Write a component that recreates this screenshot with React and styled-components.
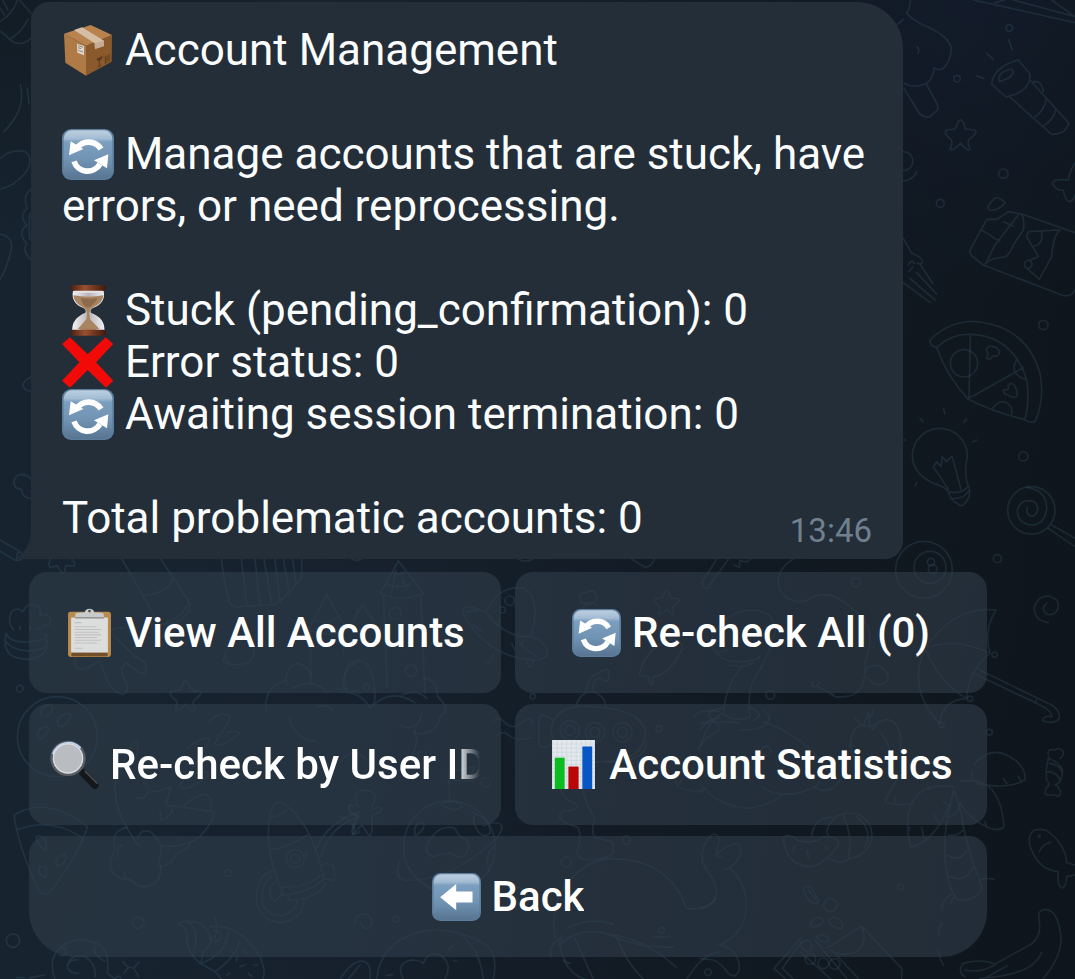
import React, { useId } from 'react';
import styled, { createGlobalStyle } from 'styled-components';

const GlobalStyle = createGlobalStyle`
  *, *::before, *::after { box-sizing: border-box; }
  html, body, #root { min-height: 100vh; }
  body {
    margin: 0;
    background: #111a23;
    font-family: Roboto, "Liberation Sans", sans-serif;
    color: #fbfcfd;
  }
`;

const Chat = styled.main`
  position: relative;
  min-height: 100vh;
  overflow: hidden;
  padding: 2px 88px 22px 29px;
  background:
    radial-gradient(ellipse 300px 260px at 0 0, rgba(14, 20, 26, 0.5), transparent),
    radial-gradient(ellipse 300px 300px at 90% 0, rgba(20, 30, 50, 0.5), transparent),
    linear-gradient(97deg, #172430 0%, #16212d 38%, #111922 68%, #0e151c 100%);
`;

const WallpaperSvg = styled.svg`
  position: absolute;
  top: 0;
  left: 0;
  width: 1075px;
  height: 979px;
  fill: none;
  stroke: #456579;
  stroke-opacity: 0.25;
  stroke-width: 5px;
  stroke-linecap: round;
  stroke-linejoin: round;
  pointer-events: none;
`;

const Thread = styled.div`
  position: relative;
  display: flex;
  flex-direction: column;
  gap: 13px;
`;

const Bubble = styled.article`
  position: relative;
  margin: 0 84px 0 2px;
  padding: 22px 31px 8px;
  background: #232e39;
  border-radius: 18px 46px 18px 0;
`;

const Tail = styled.svg`
  position: absolute;
  left: -14px;
  bottom: 0;
  width: 14px;
  height: 30px;
  fill: #232e39;
`;

const Paragraph = styled.p`
  margin: 0 0 52px;
  font-size: 44px;
  line-height: 52px;
`;

const StatList = styled.ul`
  margin: 0 0 52px;
  padding: 0;
  list-style: none;
  font-size: 44px;
  line-height: 52px;
`;

const Heading = styled.h1`
  margin: 0 0 52px;
  font-size: 44px;
  line-height: 52px;
  font-weight: 400;
`;

const Footer = styled.footer`
  display: flex;
  justify-content: space-between;
  height: 59px;
  font-size: 44px;
  line-height: 52px;
`;

const Time = styled.time`
  align-self: flex-end;
  font-size: 33px;
  line-height: 40px;
  color: #70808f;
`;

const Keyboard = styled.div`
  display: grid;
  grid-template-columns: 1fr 1fr;
  gap: 11px 14px;
`;

const Key = styled.button`
  display: flex;
  align-items: center;
  justify-content: ${(p) => (p.$clipped ? 'flex-start' : 'center')};
  min-width: 0;
  height: 121px;
  padding: 0 21px;
  border: 0;
  border-radius: ${(p) => (p.$wide ? '18px 18px 46px 46px' : '18px')};
  grid-column: ${(p) => (p.$wide ? '1 / -1' : 'auto')};
  background: rgba(48, 62, 75, 0.6);
  color: #ffffff;
  font-family: inherit;
  font-size: 42px;
  font-weight: 500;
  line-height: 50px;
  cursor: pointer;
`;

const KeyLabel = styled.span`
  display: flex;
  align-items: center;
  gap: 11px;
  min-width: 0;
  overflow: hidden;
  white-space: nowrap;
  mask-image: ${(p) =>
    p.$clipped ? 'linear-gradient(to right, #000 calc(100% - 24px), transparent)' : 'none'};
`;

const Glyph = styled.svg`
  display: inline-block;
  flex: none;
  width: ${(p) => p.$size}px;
  height: ${(p) => p.$size}px;
  vertical-align: top;
`;

function Package() {
  return (
    <Glyph $size={52} viewBox="0 0 156 156" aria-hidden="true">
      <path d="M6 29 72 65V155L10 116Z" fill="#b07a46" />
      <path d="M72 65 150 33 149 113 72 155Z" fill="#8a5a2c" />
      <path d="M6 29 86 3 150 33 72 65Z" fill="#b9834e" />
      <path d="M36 18 60 10 126 50V66L99 75 98 58Z" fill="#d6bea4" />
      <path d="M98 58 126 50V66L99 75Z" fill="#c5ac92" />
      <path d="M45 59 66 66V94L46 86Z" fill="#ddd7cc" />
      <path d="M48 65 63 70M48 71 57 74M49 79 63 84" stroke="#8d8a82" strokeWidth="3" />
      <path d="M104 106Q114 112 122 98M112 108V126M107 129 118 123M130 97V119M135 94V116M141 91V113" stroke="#5e3c1a" strokeWidth="3" fill="none" />
      <path d="M103 104 121 96 118 108 109 112Z" fill="#5e3c1a" />
    </Glyph>
  );
}

function Tile({ size, children }) {
  const id = useId();
  return (
    <Glyph $size={size} viewBox="0 0 156 156" aria-hidden="true">
      <defs>
        <linearGradient id={id} x1="0" y1="0" x2="0" y2="1">
          <stop offset="0" stopColor="#bccfe0" />
          <stop offset="0.17" stopColor="#a3bcd3" />
          <stop offset="0.24" stopColor="#7c9fbf" />
          <stop offset="0.6" stopColor="#7194b4" />
          <stop offset="1" stopColor="#587592" />
        </linearGradient>
      </defs>
      <rect x="0" y="3" width="156" height="153" rx="27" fill="#5c7d9c" />
      <rect x="5" y="7" width="146" height="145" rx="24" fill={`url(#${id})`} />
      {children}
    </Glyph>
  );
}

function Refresh({ size }) {
  return (
    <Tile size={size}>
      <path d="M44 62A43 43 0 0 1 117 63M36 100A43 43 0 0 0 114 108" fill="none" stroke="#fff" strokeWidth="17" />
      <path d="M26 40 64 63 21 82ZM139 79 96 97 135 121Z" fill="#fff" />
    </Tile>
  );
}

function ArrowLeft() {
  return (
    <Tile size={49}>
      <path d="M26 80 77 38V62H129V97H77V122Z" fill="#fff" />
    </Tile>
  );
}

function Hourglass() {
  const id = useId();
  return (
    <Glyph $size={52} viewBox="0 0 156 156" aria-hidden="true">
      <defs>
        <linearGradient id={`${id}c`}>
          <stop offset="0" stopColor="#4a2012" />
          <stop offset="0.4" stopColor="#99502f" />
          <stop offset="1" stopColor="#3d190d" />
        </linearGradient>
        <linearGradient id={`${id}g`}>
          <stop offset="0" stopColor="#f4f4f7" />
          <stop offset="0.5" stopColor="#b8b4b8" />
          <stop offset="1" stopColor="#eef0f6" />
        </linearGradient>
      </defs>
      <path d="M33 20H125Q132 58 93 72Q83 78 87 86Q130 102 127 140H31Q28 104 70 86Q74 78 64 72Q26 58 33 20Z" fill={`url(#${id}g)`} />
      <path d="M34 34Q80 42 124 34Q122 58 93 70Q83 76 82 88L84 106 112 134Q78 146 48 134L73 106 75 88Q74 76 64 70Q36 58 34 34Z" fill="#a98461" />
      <path d="M56 42Q62 66 76 70L82 70Q102 56 106 42Q82 47 56 42Z" fill="#8d6a4c" />
      <rect x="26" y="3" width="106" height="18" rx="8" fill={`url(#${id}c)`} />
      <rect x="34" y="20" width="90" height="6" rx="3" fill="#e8e2e2" />
      <rect x="26" y="137" width="106" height="18" rx="8" fill={`url(#${id}c)`} />
    </Glyph>
  );
}

function Cross() {
  return (
    <Glyph $size={52} viewBox="0 0 156 156" aria-hidden="true">
      <path d="M0 24 24 4 77 55 131 4 154 24 102 79 154 134 132 155 77 102 24 155 0 134 52 79Z" fill="#f20a08" />
    </Glyph>
  );
}

function Clipboard() {
  return (
    <Glyph $size={49} viewBox="0 0 144 144" aria-hidden="true">
      <rect x="9" y="11" width="126" height="133" rx="7" fill="#b98b4d" />
      <rect x="19" y="129" width="106" height="13" fill="#735028" />
      <rect x="18" y="28" width="108" height="103" fill="#dcdddd" />
      <path d="M28 43H48M28 55H92M28 63H106M28 71H100M28 79H106M28 87H94M28 95H106M28 103H94M28 118H52" stroke="#c0c1c0" strokeWidth="3" />
      <path d="M30 30V20Q30 13 46 13H58Q60 2 72 2T86 13H98Q114 13 114 20V30Z" fill="#c9cacc" />
      <path d="M30 29H114" stroke="#77787a" strokeWidth="3" />
      <circle cx="72" cy="9" r="4" fill="#4c5258" />
    </Glyph>
  );
}

function Magnifier() {
  return (
    <Glyph $size={49} viewBox="0 0 144 144" aria-hidden="true">
      <path d="M86 86 98 98" stroke="#8b8f94" strokeWidth="13" />
      <path d="M97 97 132 133" stroke="#15171a" strokeWidth="22" strokeLinecap="round" />
      <path d="M103 92 138 127" stroke="#4c5054" strokeWidth="4" strokeLinecap="round" />
      <circle cx="53" cy="54" r="48" fill="#b9bdc2" stroke="#595e64" strokeWidth="8" />
      <path d="M8 42A48 48 0 0 1 90 24" fill="none" stroke="#b9d4f4" strokeWidth="5" />
      <circle cx="53" cy="54" r="43" fill="none" stroke="#d9dbde" strokeWidth="4" />
    </Glyph>
  );
}

function BarChart() {
  return (
    <Glyph $size={49} viewBox="0 0 144 144" aria-hidden="true">
      <rect x="9" y="0" width="126" height="144" fill="#e3e8ed" />
      <path d="M9 12H135M9 24H135M9 36H135M9 48H135M9 60H135M9 72H135M9 84H135M9 96H135M9 108H135M9 120H135M9 132H135M24 0V144M38 0V144M52 0V144M66 0V144M80 0V144M94 0V144M108 0V144M122 0V144" stroke="#cbd5de" strokeWidth="2" />
      <rect x="17" y="52" width="29" height="92" fill="#08bd1d" />
      <rect x="57" y="78" width="30" height="66" fill="#b90707" />
      <rect x="98" y="19" width="29" height="125" fill="#0756c5" />
    </Glyph>
  );
}

const STAR = 'M0 -46Q8 -44 14 -18L42 -15Q54 -8 26 12Q18 20 28 42Q20 52 0 24Q-22 50 -32 42Q-22 20 -30 12Q-54 -6 -42 -15L-16 -18Q-8 -44 0 -46Z';

// Each sheet of doodles is drawn at three times its size, from its own origin.
const DOODLES = [
  {
    x: 0, y: 0,
    paths: [
      'M0 25 14 45M8 0 24 30M0 65Q40 40 52 0M38 125 0 92M58 0 95 42M28 118Q62 100 84 58M38 125Q65 140 92 115',
      'M61 254Q80 330 10 396M82 264 87 312',
      'M0 475Q35 445 75 455Q105 475 75 520Q40 560 0 567',
      'M95 567Q65 585 82 625Q55 645 80 675Q50 700 80 730Q65 755 95 780M90 640Q84 680 90 720',
      'M0 702Q40 710 34 745Q20 810 0 838M94 1130Q65 1145 70 1160Q78 1175 94 1173',
    ],
    dots: [],
  },
  {
    x: 0, y: 440,
    paths: [
      'M94 118Q70 95 50 108Q32 128 50 145L65 147Q65 175 94 175',
      'M0 300 60 335Q75 350 65 358Q50 366 35 355L0 333M60 335Q48 340 50 358',
      'M152 357Q142 375 150 382L172 377Q185 405 194 395L197 377 222 378Q228 370 215 357',
      'M366 357 476 550Q540 560 568 510L570 490 482 357M435 466Q500 460 520 416M500 545Q550 530 565 485',
      'M664 357Q675 450 690 490Q700 505 720 500L825 493 840 485 905 415V357M724 357 740 495M765 357 780 495M792 357 815 492M825 357 840 485M850 357 868 458M878 357 888 432',
      'M18 580Q5 640 50 653Q110 670 137 630Q145 605 135 580M18 580Q35 620 130 598M16 605Q60 650 138 622M40 570Q20 545 35 515Q55 500 68 515Q85 480 115 500Q125 510 120 525Q155 520 152 545Q145 560 130 555Q125 572 112 565M60 558V570M90 558V570',
      'M325 590Q330 560 365 565Q410 555 412 600L405 625 435 590M260 625Q215 650 225 675Q235 695 260 685L300 662Q325 740 350 757Q380 775 383 740L366 700Q362 675 380 670Q400 685 415 697Q440 705 440 685Q436 660 405 650L345 590',
      'M680 630 668 665 690 672Q745 680 760 650L762 625M690 672 675 650',
      'M980 465 925 570M980 465 1040 570M945 540Q980 555 1015 530M930 570Q980 595 1038 570M932 575V735M1030 575V640',
      'M860 735Q850 690 890 670Q925 675 935 710M1030 750Q1020 690 1080 660M880 745Q940 710 980 757Q1030 735 1080 760',
      'M798 810Q790 740 860 720',
    ],
    stars: [[557, 768, 1]],
    dots: [[59, 746, 10]],
  },
  {
    x: 0, y: 690,
    paths: [
      'M150 43Q120 48 122 72Q130 90 150 72Q165 55 150 43ZM205 70Q175 70 172 100Q178 120 202 98Q220 78 205 70ZM138 110Q112 115 112 138Q120 155 138 135Q154 115 138 110Z',
      'M625 100Q650 65 690 75Q695 90 642 160Q660 180 718 130Q712 120 680 128M565 175Q600 140 630 145Q630 165 540 285Q550 315 625 255Q625 240 600 248',
      'M345 270Q340 320 365 385Q400 450 420 470M345 290Q345 260 365 235Q375 190 405 155Q420 165 408 200M430 270Q450 310 470 305L512 292 498 345 640 365Q650 380 600 440Q555 475 485 468M548 355Q560 330 610 312Q640 315 632 360M412 325Q435 330 443 305M480 362 485 390Q510 385 518 355',
      'M382 412Q330 420 345 480Q320 520 340 550Q360 570 390 568Q430 610 475 570Q490 530 475 515Q500 460 450 425Q420 415 412 450M365 465Q350 475 352 500M372 545Q372 570 390 570M475 530Q515 530 530 490Q570 475 570 458',
      'M42 375Q140 315 262 410Q245 480 155 600Q135 625 115 600Q55 470 42 375ZM50 420Q150 380 245 442M108 440Q145 430 138 483Q110 465 108 440ZM192 492Q160 500 170 528Q200 520 198 500ZM118 530Q145 520 138 562Q110 555 118 530Z',
      'M835 335Q805 345 805 440Q805 500 845 600L850 615Q940 605 972 565Q935 395 850 340ZM808 378Q840 385 860 358M812 480Q870 470 922 435M838 592Q920 595 962 555M865 618V632Q940 630 975 585L970 575M825 542Q765 550 770 640Q790 700 850 697Q910 685 912 630M815 560Q780 580 788 645Q805 680 845 677Q885 670 893 632M828 575Q790 600 825 635L848 608M960 530Q980 510 1000 530Q1010 560 1000 572L970 565M945 485Q980 395 1080 365M962 500Q990 405 1080 380M915 485Q925 490 920 502',
      'M1045 350Q1050 335 1080 352M1045 350Q1050 375 1070 370L1055 425Q1062 440 1078 425',
      'M165 867Q140 800 190 765Q240 735 300 765Q330 790 322 850L345 867Q355 850 365 867M202 830Q210 790 255 800Q290 820 285 860M180 775Q195 770 200 788Q195 800 178 795M285 770Q275 790 315 815M235 850Q205 850 202 830Q210 805 235 810M368 815 385 832M417 815 403 832M372 850Q395 810 415 860M50 863H72M90 863 135 855',
      'M645 683Q655 710 645 745M632 735Q640 770 662 745Q665 720 640 722M535 705Q545 685 600 700Q630 715 632 760Q600 790 605 820M535 705Q565 705 562 760Q565 790 600 820L645 845Q710 800 720 750M562 695Q600 710 580 795M600 820Q675 800 685 725M630 710Q720 700 780 800Q800 850 788 867M645 845 665 867M733 780 738 792M710 800V815M720 830 735 825M760 825H772M745 850 755 860M680 855 690 850',
      'M869 85Q880 145 950 155M1045 867 1080 825M950 50Q975 40 1000 60',
    ],
    dots: [[172, 140, 120], [886, 506, 27], [886, 506, 14], [684, 549, 10], [415, 698, 17], [39, 752, 20]],
  },
  {
    x: 340, y: 550,
    paths: [
      'M175 33 120 130Q180 160 250 130ZM158 66Q175 78 192 66M140 102Q180 118 210 102M130 140 142 412M242 135 255 430M168 60 155 128M187 85 200 115',
      'M68 163 40 215M68 163 100 210M20 425Q0 330 60 330Q105 340 105 450L100 460M55 178 45 205M80 178 92 205',
      'M0 425Q65 425 90 475Q150 410 225 458M185 435Q230 415 260 445M250 385Q290 385 293 440Q335 480 300 500Q290 560 220 550M245 490Q235 550 180 525M0 640Q40 580 80 632M225 540Q240 600 200 630',
      'M438 185Q480 100 555 115Q605 150 572 260Q495 265 438 185ZM438 185 395 172Q350 165 380 210Q460 330 590 330Q650 320 600 270L572 258M382 185 410 182M480 205 470 225M515 280 525 300M550 270 542 285M438 335Q445 350 460 310M560 335Q575 370 580 330M540 285 590 320M400 225 425 245',
      'M725 160Q710 125 740 128Q755 115 765 130Q780 145 760 158ZM730 175Q735 155 775 165',
      'M905 350Q935 280 1000 268Q1040 275 1020 310Q980 380 940 380Q940 410 930 400L925 378Q890 380 900 365Z',
      'M708 470Q720 425 755 425Q795 435 797 470M738 422Q745 375 775 370Q790 355 808 362L805 392Q790 395 780 382Q755 395 760 420M637 520Q660 460 760 470Q910 480 917 550Q910 640 770 635Q680 625 637 560Q630 540 637 520ZM640 512Q600 480 597 510V585Q610 605 650 570',
      'M458 515Q475 495 495 518T545 518T578 525M472 555Q490 540 510 558T575 562',
      'M875 27 915 52Q935 50 943 27M1060 500Q1080 475 1140 485M1080 540Q1110 500 1140 505M1075 600Q1090 560 1140 540M535 27Q555 40 578 27M35 27Q50 35 65 27',
    ],
    stars: [[980, 158, 0.8]],
    dots: [[166, 190, 18], [213, 362, 17], [80, 411, 9], [509, 152, 14], [487, 180, 9], [578, 439, 8], [690, 541, 29], [690, 541, 15], [765, 547, 29], [765, 547, 15], [847, 547, 29], [847, 547, 15], [957, 536, 9]],
  },
  {
    x: 340, y: 700,
    paths: [
      'M52 315Q35 270 80 270Q120 280 95 320M45 325Q25 310 28 330Q30 350 55 345Q35 400 38 405L65 375 88 408Q100 405 95 345Q125 340 125 325Q115 315 98 330M0 350Q35 360 45 390',
      'M180 480Q160 535 195 540Q320 550 465 420Q490 390 485 375Q470 360 430 378M325 225 330 310M330 215 405 200Q385 230 402 245L335 240M305 310Q350 295 368 320Q345 340 305 315M395 335Q450 355 450 400Q420 420 405 375Q395 350 405 345M258 440Q270 415 285 400Q310 375 345 385Q355 410 380 420Q395 435 375 465Q355 480 335 460Q300 460 280 470Q258 465 258 440M225 405Q220 365 250 368Q260 385 230 405M462 440Q430 470 448 515',
      'M660 265Q670 300 705 310Q720 330 690 330Q655 330 660 355Q670 370 710 380Q730 400 710 460Q720 490 790 475Q835 465 815 425L765 412Q750 395 765 355Q740 320 725 265',
      'M45 672Q45 640 75 642Q105 655 92 680Q70 695 62 668',
      'M645 715Q630 600 690 540Q755 465 850 478Q990 490 1040 625Q1095 635 1130 595M635 770Q620 740 665 710L655 735Q720 680 800 700Q880 745 1000 740M660 735Q670 790 690 790M670 780Q700 830 735 837M680 685Q745 650 820 672M820 705Q920 720 1010 803M705 715 760 837M830 712Q860 790 910 837M940 710H990M1040 837Q1090 760 1140 755',
      'M110 837Q120 730 240 695Q340 675 440 735Q475 765 460 837M355 697Q420 745 430 837M190 837Q165 790 215 780Q240 780 250 790Q265 750 300 765Q340 790 315 837M0 837Q40 775 75 785Q95 795 90 837M325 750 340 735M340 783H350M138 827 158 823',
      'M500 560Q530 555 550 570M1005 240Q1010 275 1090 275M1010 260 1025 240',
      'M800 185Q910 190 920 130',
    ],
    dots: [[328, 440, 137], [437, 247, 14], [247, 165, 12], [859, 420, 12], [679, 486, 15], [168, 658, 9], [964, 691, 9]],
  },
  {
    x: 700, y: 550,
    paths: [
      'M5 100 50 27M5 100Q15 120 25 112L85 27M102 45 118 52 120 32Q145 40 152 27',
      'M280 27Q225 60 237 115Q265 165 320 152Q365 120 415 145Q480 185 503 230Q520 270 495 340Q500 440 430 440Q405 445 390 430L350 408Q330 415 340 395M350 408 360 395M495 370Q500 340 540 348Q575 375 560 395Q530 420 500 380M388 428 402 435',
      'M85 300Q30 320 35 270Q60 200 130 183Q220 170 227 240Q205 325 165 380Q140 430 150 500Q110 520 70 492Q75 410 125 350M35 285Q60 340 120 335Q165 335 182 318M90 345Q135 355 158 338M70 475Q10 480 35 510L60 530M150 475Q200 490 160 512M0 520Q80 510 120 520M120 540Q210 540 208 500L190 480M0 590Q30 500 70 490M190 515Q290 550 360 628',
      'M675 295Q620 420 720 520Q725 450 800 445Q805 360 870 310Q850 240 888 180Q765 165 675 295ZM675 295Q770 260 870 310M675 295Q720 400 800 445M820 370 1010 460Q1060 485 1055 500Q1030 495 1028 512Q1060 525 1078 505Q1080 480 1055 465L828 355M1005 460 1010 450',
      'M1045 218Q1000 210 1003 170Q1015 137 1045 138Q1080 145 1074 175Q1065 200 1040 192Q1020 175 1040 160',
      'M465 505 490 528 505 485 510 530 540 515M518 480 515 500M455 590Q445 540 485 525Q515 530 520 540Q540 495 580 515Q610 545 600 600M545 552Q570 580 572 628M450 580Q455 620 470 640',
    ],
    dots: [[467, 97, 13], [211, 435, 13], [868, 547, 9], [884, 314, 8], [810, 446, 8], [724, 525, 8], [198, 603, 14]],
  },
  {
    x: 700, y: 740,
    paths: [
      'M0 130Q50 200 150 205Q220 190 245 165M185 140Q220 170 290 160Q350 145 360 125M340 140Q390 170 420 120M0 150 20 145',
      'M555 185Q580 130 610 95M555 185Q590 200 640 190M760 140Q660 125 630 200Q615 260 632 322Q710 300 750 190M780 125Q900 100 912 260Q900 275 870 265Q810 240 780 190M820 75Q870 15 930 50Q980 80 975 120Q925 150 830 130M585 170V188M680 130 688 150M665 262 672 295M630 262 622 282M700 220 718 250M730 185 750 200M855 245 860 262M910 115 920 130M815 95V115M955 110 965 125',
      'M762 150Q720 300 740 390Q745 440 770 478Q815 490 845 450Q845 430 825 385Q790 280 785 225M762 150 785 225M745 285Q770 290 790 270M742 345Q780 370 800 330M750 410Q800 430 820 380M748 230Q775 225 780 190M840 420Q865 412 882 418M752 462Q730 480 725 505M765 465Q755 480 753 490M725 550Q715 570 716 585M714 630Q718 655 730 676',
      'M250 295Q260 275 290 300Q340 315 370 290Q420 290 415 315Q370 380 325 380Q255 370 250 295ZM335 290Q340 230 400 232Q440 210 480 225Q520 250 515 295Q500 350 450 355Q430 370 410 365L385 355M415 225Q370 260 385 290M430 225Q460 290 445 355M470 230Q520 270 495 320M380 355 400 335M285 318 278 335M322 332 325 355M375 318 385 328',
      'M65 350Q50 350 48 345L58 300Q50 270 30 290Q0 320 8 370Q50 430 50 460Q40 500 0 505M48 345Q85 310 110 310Q130 320 122 345Q100 385 70 390M88 385Q145 430 138 515Q130 580 60 615H48M60 615Q120 630 118 690Q105 720 85 700Q65 670 40 660L0 655',
      'M310 450Q315 430 335 445L355 480Q360 495 340 490Q320 480 310 450ZM325 450 348 480M330 552Q340 530 360 532Q375 540 365 552Q340 570 330 552ZM385 540Q400 530 415 535Q435 550 425 565Q390 565 385 540ZM350 590Q365 580 380 590Q395 600 380 605Q360 610 350 590Z',
      'M380 625 485 558 605 685V715M485 558Q505 610 470 635Q430 650 400 635M395 630 475 715M305 592 222 685 255 715M305 605 247 685 278 715M345 600 440 715M300 635 390 715',
      'M1045 45Q1040 25 1065 30Q1080 20 1090 35Q1090 50 1080 55M1045 55Q1085 70 1088 95Q1085 130 1065 135M1048 50Q1035 80 1040 120Q1050 130 1045 140M1045 135Q1025 165 1045 165L1065 165Q1080 175 1082 155L1070 135M1048 70Q1080 75 1085 95M1040 95Q1070 95 1080 120',
      'M1125 375 1100 368Q1095 310 1040 272Q985 255 988 310Q1010 390 1075 395Q1070 445 1090 443Q1100 430 1100 410L1125 405M1018 335Q1030 310 1052 307',
      'M1030 715Q1095 640 1080 570Q1070 510 1035 508Q1010 510 1018 545Q1025 600 980 620L885 672Q845 655 790 670Q770 695 795 710M840 715Q930 710 980 685Q1010 670 1025 637M860 712 922 677M795 690Q840 700 885 675',
    ],
    dots: [[391, 495, 20], [602, 441, 9], [320, 617, 16], [331, 657, 16], [370, 670, 16], [404, 672, 16], [24, 697, 10], [1018, 288, 3]],
  },
  {
    x: 880, y: 0,
    paths: [
      'M92 0Q88 30 80 40Q90 55 130 75Q205 105 214 145Q212 185 190 205Q178 214 163 203Q160 235 140 250Q105 268 72 250M72 265 112 330Q125 355 150 350L172 330Q178 325 170 310L138 250M50 75 70 58M112 140Q120 150 114 160',
      'M280 0 585 68M345 8 375 0M400 0 585 50M515 0 585 50',
      'M335 252Q340 200 415 180L450 222Q452 275 378 291ZM358 245Q350 215 395 207Q412 228 358 245M388 290 515 403Q555 405 567 370L450 240M460 245Q485 240 490 275M465 350Q495 330 498 298M490 378Q520 360 527 330M386 118 397 152M320 160 340 178M290 228 312 235',
      'M70 455A28 28 0 0 1 70 512M70 543Q100 540 110 515',
      'M585 490Q570 510 565 540Q520 535 517 550Q530 575 550 570Q555 605 570 605Q582 600 585 585',
      'M348 592Q372 600 375 610Q350 635 328 630Q315 620 348 592',
      'M385 635 350 658H320L270 750Q268 765 285 775L310 795 545 885Q570 895 585 870M425 642 585 698M305 690 360 725M385 635 425 642Q435 660 430 690L400 735Q385 775 365 772Q330 775 310 795M415 645 345 735 320 785M370 665 400 678M445 695 540 690Q520 705 515 770L478 838 435 800Q430 780 450 780L475 770 440 710ZM485 697Q490 735 460 738M450 780Q465 800 442 806',
      'M70 715 95 760Q125 770 128 785Q125 795 112 790M118 790 158 850M110 818 170 882M90 835 165 900M70 848 150 907M85 795Q95 775 103 790M85 815Q95 810 98 800',
    ],
    stars: [[242, 405, 1]],
    dots: [[388, 84, 10], [231, 236, 10], [370, 521, 14], [181, 610, 12]],
  },
  {
    x: 880, y: 300,
    paths: [
      'M150 120Q210 60 290 65Q440 80 480 220Q495 300 465 365Q450 370 432 358Q350 340 265 298Q200 230 170 142Q150 140 150 120M170 142Q215 100 275 103Q400 110 440 240Q450 300 435 358M271 103 267 295 430 203M410 180Q385 220 438 240M338 325Q370 285 395 325V342M318 148Q325 135 340 140Q360 145 357 162Q350 172 338 168Q332 182 320 175L325 160ZM385 255Q400 245 405 260Q415 275 410 290Q395 295 385 285Q370 285 370 270L385 268Z',
      'M205 575Q195 560 160 550Q97 520 97 465A82 82 0 0 1 262 470Q250 520 265 560M205 575Q245 585 265 558Q275 580 262 600Q245 628 232 610Q215 605 205 575M212 595Q250 600 266 572M205 568 160 500 170 485 183 500 187 470 200 485 216 468 243 568M190 325 195 342M120 355 130 366M260 357 250 368M290 420 278 426M105 558 110 548M70 420H76',
      'M440 562Q500 570 500 625Q495 675 452 675Q412 668 412 632Q418 600 450 602Q475 605 473 630Q468 650 452 648Q435 640 443 622M515 675 585 715M505 685 585 740',
    ],
    dots: [[252, 190, 41], [490, 75, 14], [430, 469, 14], [352, 776, 12], [454, 631, 71], [132, 809, 85], [150, 802, 48], [153, 786, 11], [158, 807, 13]],
  },
];

function Wallpaper() {
  return (
    <WallpaperSvg viewBox="0 0 1075 979" aria-hidden="true">
      {DOODLES.map((sheet, i) => (
        <g key={i} transform={`translate(${sheet.x} ${sheet.y}) scale(0.33333)`}>
          {sheet.paths.map((d) => (
            <path key={d} d={d} />
          ))}
          {(sheet.stars || []).map(([x, y, s]) => (
            <path key={`${x}-${y}`} d={STAR} transform={`translate(${x} ${y}) scale(${s})`} />
          ))}
          {sheet.dots.map(([cx, cy, r]) => (
            <circle key={`${cx}-${cy}-${r}`} cx={cx} cy={cy} r={r} />
          ))}
        </g>
      ))}
    </WallpaperSvg>
  );
}

function KeyboardButton({ icon, children, clipped, wide }) {
  return (
    <Key type="button" $clipped={clipped} $wide={wide}>
      <KeyLabel $clipped={clipped}>
        {icon}
        <span>{children}</span>
      </KeyLabel>
    </Key>
  );
}

export default function App() {
  return (
    <>
      <GlobalStyle />
      <Chat>
        <Wallpaper />
        <Thread>
          <Bubble>
            <Heading><Package /> Account Management</Heading>
            <Paragraph>
              <Refresh size={52} /> Manage accounts that are stuck, have errors, or need reprocessing.
            </Paragraph>
            <StatList>
              <li><Hourglass /> Stuck (pending_confirmation): 0</li>
              <li><Cross /> Error status: 0</li>
              <li><Refresh size={52} /> Awaiting session termination: 0</li>
            </StatList>
            <Footer>
              <span>Total problematic accounts: 0</span>
              <Time dateTime="13:46">13:46</Time>
            </Footer>
            <Tail viewBox="0 0 14 30" aria-hidden="true">
              <path d="M14 0V30H2Q-1 29 2 27Q14 18 14 0Z" />
            </Tail>
          </Bubble>
          <Keyboard>
            <KeyboardButton icon={<Clipboard />}>View All Accounts</KeyboardButton>
            <KeyboardButton icon={<Refresh size={49} />}>Re-check All (0)</KeyboardButton>
            <KeyboardButton icon={<Magnifier />} clipped>Re-check by User ID</KeyboardButton>
            <KeyboardButton icon={<BarChart />}>Account Statistics</KeyboardButton>
            <KeyboardButton icon={<ArrowLeft />} wide>Back</KeyboardButton>
          </Keyboard>
        </Thread>
      </Chat>
    </>
  );
}
